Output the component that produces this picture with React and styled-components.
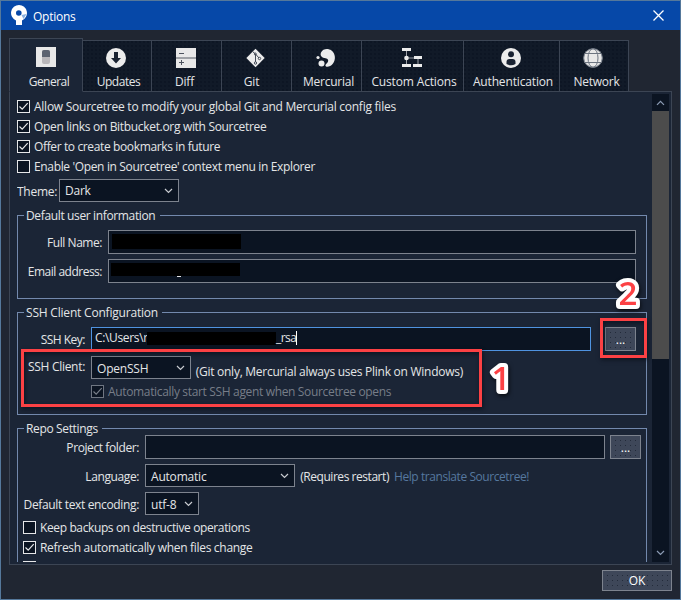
import React from "react";
import styled, { createGlobalStyle, css } from "styled-components";

const c = {
  panel: "#1b2536",
  chrome: "#202632",
  field: "#0b1422",
  edge: "#3c4554",
  fieldEdge: "#7d838e",
  group: "#7389ad",
  text: "#e4e5e7",
  red: "#fc4144",
};

const Global = createGlobalStyle`
  * { box-sizing: border-box; }
  body { margin: 0; overflow: hidden; background: ${c.chrome}; }
`;

const Window = styled.main`
  width: 681px;
  height: 600px;
  display: flex;
  flex-direction: column;
  border: 1px solid #55789b;
  background: ${c.chrome};
  color: ${c.text};
  font: 12px/16px "Open Sans", "Noto Sans", sans-serif;
  letter-spacing: -0.2px;
  white-space: nowrap;
`;

const TitleBar = styled.header`
  height: 29px;
  flex: none;
  display: flex;
  align-items: center;
  padding: 0 16px 0 9px;
  gap: 6px;
  background: #0648a8;
  color: #fff;
`;

const Title = styled.h1`
  flex: 1;
  margin: 2px 0 0;
  font: inherit;
  letter-spacing: -0.25px;
`;

const Text = styled.span`
  letter-spacing: ${(p) => p.$ls ?? -0.2}px;
  margin-top: ${(p) => p.$drop || 0}px;
  color: ${(p) => p.$color || "inherit"};
`;

const TabStrip = styled.nav`
  display: flex;
  align-items: flex-end;
  height: 54px;
  flex: none;
  margin: 8px 0 -1px 8px;
`;

const Tab = styled.div`
  flex: none;
  width: ${(p) => p.$w}px;
  height: 52px;
  padding: 7px 2px 0 0;
  display: flex;
  flex-direction: column;
  align-items: center;
  gap: 6px;
  border: 1px solid ${c.edge};
  border-left-width: ${(p) => (p.$first ? 1 : 0)}px;
  background: radial-gradient(circle at 1px 1px, #0b1422 0.6px, transparent 1px) 0 0 / 4px 4px #111a28;
  ${(p) =>
    p.$active &&
    css`
      height: 54px;
      padding: 8px 0 0;
      gap: 7px;
      border-bottom-color: ${c.panel};
      background: ${c.panel};
      position: relative;
    `}
`;

const TabLabel = styled.span`
  margin-left: ${(p) => p.$shift || 0}px;
  letter-spacing: ${(p) => p.$ls ?? -0.2}px;
`;

const Panel = styled.section`
  width: 663px;
  height: 474px;
  flex: none;
  margin-left: 8px;
  padding: 1px 2px 1px 7px;
  display: flex;
  justify-content: space-between;
  border: 1px solid ${c.edge};
  background: ${c.panel};
`;

const Content = styled.div`
  width: 630px;
  height: 469px;
  padding-top: 3px;
  overflow: hidden;
`;

const ScrollTrack = styled.div`
  width: 17px;
  height: 468px;
  margin-top: 1px;
  display: flex;
  flex-direction: column;
  background: ${c.field};
`;

const ScrollButton = styled.div`
  height: 17px;
  flex: none;
  display: flex;
  align-items: center;
  justify-content: center;
  padding-bottom: ${(p) => p.$lift || 0}px;
`;

const ScrollThumb = styled.div`
  height: 248px;
  margin-bottom: auto;
  background: #4c4c4c;
`;

const CheckRow = styled.div`
  display: flex;
  align-items: flex-start;
  height: 20px;
  gap: 4px;
  padding: 3px 0 0 ${(p) => p.$indent || 0}px;
  color: ${(p) => (p.$off ? "#777d88" : "inherit")};
`;

const Box = styled.span`
  width: 13px;
  height: 13px;
  margin-top: 1px;
  flex: none;
  display: flex;
  border: 1px solid ${(p) => (p.$off ? "#6f7682" : "#e6e7e9")};
  background: ${c.field};
`;

const Row = styled.div`
  display: flex;
  align-items: center;
  height: ${(p) => p.$h || 24}px;
  margin-top: ${(p) => p.$top || 0}px;
`;

const FieldLabel = styled.label`
  width: ${(p) => p.$w}px;
  margin-right: ${(p) => p.$gap ?? 6}px;
  margin-top: ${(p) => p.$drop ?? 2}px;
  flex: none;
  text-align: right;
  letter-spacing: ${(p) => p.$ls ?? -0.4}px;
`;

const Group = styled.section`
  height: ${(p) => p.$h}px;
  margin-top: ${(p) => p.$top}px;
  border: 1px solid ${c.group};
`;

const Legend = styled.h2`
  width: ${(p) => p.$w}px;
  height: 16px;
  margin: -9px 0 0 6px;
  padding: 1px 0 0 2px;
  font: inherit;
  letter-spacing: ${(p) => p.$ls ?? -0.2}px;
  background: ${c.panel};
`;

const Field = styled.div`
  width: ${(p) => p.$w}px;
  height: 24px;
  flex: none;
  display: flex;
  align-items: flex-start;
  padding: 2px 3px;
  border: 1px solid ${(p) => (p.$focus ? "#4f93e0" : c.fieldEdge)};
  background: ${c.field};
`;

const PathStart = styled.span`
  width: 52px;
  flex: none;
  letter-spacing: -0.35px;
`;

const Redaction = styled.span`
  width: ${(p) => p.$w}px;
  height: ${(p) => p.$h}px;
  margin: ${(p) => p.$m || 0};
  flex: none;
  background: #000;
`;

const Remnant = styled.span`
  width: 4px;
  height: 1px;
  margin: 14px 0 0 -63px;
  background: #e4e5e7;
`;

const Caret = styled.span`
  width: 1px;
  height: 14px;
  margin-top: 1px;
  background: #fff;
`;

const Select = styled.div`
  width: ${(p) => p.$w}px;
  height: 23px;
  flex: none;
  display: flex;
  align-items: center;
  justify-content: space-between;
  padding: 0 5px;
  border: 1px solid ${c.fieldEdge};
  background: ${c.field};
`;

const Button = styled.button`
  width: ${(p) => p.$w}px;
  height: ${(p) => p.$h || 24}px;
  flex: none;
  margin-left: ${(p) => p.$left || 0}px;
  padding: ${(p) => p.$drop || 0}px 0 0;
  border: 1px solid ${c.fieldEdge};
  background: radial-gradient(circle at 2.5px 2.5px, #232b3a 0.7px, transparent 0.9px) 2px 2px / 5px 5px #3e4759;
  color: #fff;
  font: inherit;
`;

const Footer = styled.footer`
  display: flex;
  justify-content: flex-end;
  padding: 5px 8px 0 0;
`;

const Highlight = styled.div`
  position: absolute;
  left: ${(p) => p.$x}px;
  top: ${(p) => p.$y}px;
  width: ${(p) => p.$w}px;
  height: ${(p) => p.$h}px;
  border: 3px solid ${c.red};
  box-shadow: 1px 2px 4px rgba(5, 10, 20, 0.6), inset 1px 2px 4px rgba(5, 10, 20, 0.6);
`;

const CalloutBadge = styled.svg`
  position: absolute;
  left: ${(p) => p.$x}px;
  top: ${(p) => p.$y}px;
  filter: drop-shadow(1px 2px 2px rgba(0, 0, 0, 0.65));

  text {
    font: 600 33px "Open Sans", sans-serif;
    letter-spacing: 0;
    text-anchor: middle;
    fill: ${c.red};
    stroke: #fff;
    stroke-width: 8px;
    stroke-linejoin: round;
    paint-order: stroke fill;
  }
`;

const Callout = ({ x, y, children }) => (
  <CalloutBadge $x={x} $y={y} width="40" height="44">
    <text x="20" y="34">{children}</text>
  </CalloutBadge>
);

const Chevron = ({ up, color = "#c9ccd1" }) => (
  <svg width="9" height="6" viewBox="0 0 9 6" fill="none" stroke={color} strokeWidth="1.2">
    <path d={up ? "M1 4.8 4.5 1.3 8 4.8" : "M1 1 4.5 4.5 8 1"} />
  </svg>
);

const Check = ({ label, on, off, indent, ls }) => (
  <CheckRow $indent={indent} $off={off}>
    <Box $off={off}>
      {on && (
        <svg width="11" height="11" viewBox="0 0 11 11" fill="none" stroke={off ? "#777d88" : "#e6e7e9"} strokeWidth="1.2">
          <path d="M1.5 5.5 4.2 8.2 9.7 2.2" />
        </svg>
      )}
    </Box>
    <Text $ls={ls}>{label}</Text>
  </CheckRow>
);

const glyphs = {
  General: (
    <>
      <path fill="#e8e8e8" d="M0 0h20v20H0z" />
      <rect x="6" y="3" width="8" height="14" rx="2" fill="#b9b7ba" />
      <path fill="#5c6370" d="M6 5q0-2 2-2h4q2 0 2 2v5H6z" />
    </>
  ),
  Updates: (
    <>
      <circle cx="10" cy="10" r="10" fill="#ececec" />
      <path fill="#1a2332" d="M8 4h4v6h3l-5 5.500L5 10h3z" />
    </>
  ),
  Diff: (
    <>
      <path fill="#e8e8e8" d="M0 0h20v9H0zM0 11h20v9H0z" />
      <path fill="#9ea1a6" d="M0 9h20v2H0z" />
      <path stroke="#4d535e" d="M3 5.500h5M3 14.500h5M5.500 12v5" />
    </>
  ),
  Git: (
    <>
      <path fill="#ececec" d="m9.500.8 9.200 9.200-9.200 9.200L.3 10z" />
      <g fill="none" stroke="#454c58">
        <path d="M6.500 3.500 9.500 6v8M9.500 6l3.500 4" />
        <circle cx="9.500" cy="15" r="1.200" />
        <circle cx="13.500" cy="10.500" r="1.200" />
        <circle cx="9.300" cy="6" r="1" />
      </g>
    </>
  ),
  Mercurial: (
    <g fill="#ececec">
      <path d="M5 4.500C7 .5 12 0 15.500 2.500c4 3 4.500 9 1.500 13-2 2.700-5.500 4-7 3-1.500-1.200.5-2.500 1.500-4 1.500-2 .5-4-2-4.200C6.500 10 3.500 8 5 4.500z" />
      <circle cx="5.500" cy="15.500" r="3" />
      <circle cx="2" cy="9.500" r="1.600" />
    </g>
  ),
  "Custom Actions": (
    <>
      <path fill="none" stroke="#9ca0a7" d="M4.500 3v14M4.500 10H16v7" />
      <path fill="#ececec" d="M0 0h9v3H0zM0 16h9v3H0zM11 16h9v3h-9zM12 8h8v3h-8z" />
      <circle cx="4.500" cy="10" r="2.300" fill="#ececec" />
    </>
  ),
  Authentication: (
    <>
      <circle cx="10" cy="10" r="10" fill="#ececec" />
      <circle cx="10" cy="6.300" r="3" fill="#1a2332" />
      <path fill="#1a2332" d="M5.500 16v-2q0-3 3-3h3q3 0 3 3v2q-4.500 2.500-9 0z" />
    </>
  ),
  Network: (
    <>
      <circle cx="10" cy="10" r="9.500" fill="#e8e8e8" />
      <g fill="none" stroke="#6c7480" strokeWidth="1">
        <circle cx="10" cy="10" r="9.300" />
        <ellipse cx="10" cy="10" rx="5" ry="9.300" />
        <path d="M2 5.500h16M2 14.500h16" />
      </g>
    </>
  ),
};

const tabs = [
  ["General", 74, 6, -0.5],
  ["Updates", 69, 5, -0.45],
  ["Diff", 70, -2, -0.2],
  ["Git", 70, -8, -0.2],
  ["Mercurial", 70, 6, -0.25],
  ["Custom Actions", 102, 5, -0.15],
  ["Authentication", 96, 5, -0.15],
  ["Network", 69, 7, -0.25],
];

export default function App() {
  return (
    <>
      <Global />
      <Window>
        <TitleBar>
          <svg width="17" height="21" viewBox="0 0 17 21">
            <path fill="#fff" d="M9 0a8 8 0 0 1 3 15.400V20H6v-4.600A8 8 0 0 1 9 0z" />
            <circle cx="8.800" cy="8" r="2.800" fill="#0648a8" />
            <path fill="#8ab0df" d="m11.500 10 5-1-3 5z" />
          </svg>
          <Title>Options</Title>
          <svg width="11" height="11" viewBox="0 0 11 11" stroke="#fff" strokeWidth="1.300">
            <path d="m.5.5 10 10M10.500.5l-10 10" />
          </svg>
        </TitleBar>

        <TabStrip>
          {tabs.map(([name, w, shift, ls], i) => (
            <Tab key={name} $w={w} $active={i === 0} $first={i === 0}>
              <svg width="20" height="20" viewBox="0 0 20 20">{glyphs[name]}</svg>
              <TabLabel $shift={shift} $ls={ls}>{name}</TabLabel>
            </Tab>
          ))}
        </TabStrip>

        <Panel>
          <Content>
            <Check on ls={-0.25} label="Allow Sourcetree to modify your global Git and Mercurial config files" />
            <Check on ls={-0.32} label="Open links on Bitbucket.org with Sourcetree" />
            <Check on ls={-0.37} label="Offer to create bookmarks in future" />
            <Check ls={-0.35} label="Enable 'Open in Sourcetree' context menu in Explorer" />
            <Row $h={23} $top={3}>
              <FieldLabel $w={38} $gap={4} $ls={-0.25}>Theme:</FieldLabel>
              <Select $w={120}><Text $drop={1} $ls={-0.25}>Dark</Text><Chevron /></Select>
            </Row>

            <Group $h={84} $top={13}>
              <Legend $w={136} $ls={-0.36}>Default user information</Legend>
              <Row $top={7}>
                <FieldLabel $w={84} $ls={-0.45}>Full Name:</FieldLabel>
                <Field $w={528}><Redaction $w={129} $h={15} $m="1px 0 0 0" /></Field>
              </Row>
              <Row $top={5}>
                <FieldLabel $w={84} $ls={-0.5}>Email address:</FieldLabel>
                <Field $w={528}><Redaction $w={129} $h={13} $m="1px 0 0 -1px" /><Remnant /></Field>
              </Row>
            </Group>

            <Group $h={103} $top={13}>
              <Legend $w={138}>SSH Client Configuration</Legend>
              <Row $top={7}>
                <FieldLabel $w={67} $ls={-0.5}>SSH Key:</FieldLabel>
                <Field $w={500} $focus>
                  <PathStart>C:\Users\r</PathStart><Redaction $w={129} $h={13} $m="2px 0 0 0" /><Text $ls={-0.55}>_rsa</Text><Caret />
                </Field>
                <Button $w={31} $left={14} $drop={2}>...</Button>
              </Row>
              <Row $h={23} $top={5}>
                <FieldLabel $w={67} $drop={-2} $ls={-0.3}>SSH Client:</FieldLabel>
                <Select $w={100}><Text $drop={2}>OpenSSH</Text><Chevron /></Select>
                <FieldLabel as="span" $gap={0} $drop={8} $w={272} $ls={-0.26}>(Git only, Mercurial always uses Plink on Windows)</FieldLabel>
              </Row>
              <Row $h={20} $top={2}>
                <Check on off indent={73} ls={-0.34} label="Automatically start SSH agent when Sourcetree opens" />
              </Row>
            </Group>

            <Group $h={200} $top={13}>
              <Legend $w={78} $ls={-0.35}>Repo Settings</Legend>
              <Row $top={-1}>
                <FieldLabel $w={121}>Project folder:</FieldLabel>
                <Field $w={460} />
                <Button $w={31} $left={5} $drop={1}>...</Button>
              </Row>
              <Row $h={23} $top={5}>
                <FieldLabel $w={121}>Language:</FieldLabel>
                <Select $w={150}><Text $drop={2}>Automatic</Text><Chevron /></Select>
                <FieldLabel as="span" $w={94} $gap={5} $ls={-0.45}>(Requires restart)</FieldLabel>
                <Text $color="#56789f" $drop={2} $ls={-0.43}>Help translate Sourcetree!</Text>
              </Row>
              <Row $h={23} $top={5}>
                <FieldLabel $w={121} $ls={-0.35}>Default text encoding:</FieldLabel>
                <Select $w={54}><Text $drop={2}>utf-8</Text><Chevron /></Select>
              </Row>
              <Row $h={2} />
              <Check indent={5} ls={-0.38} label="Keep backups on destructive operations" />
              <Check on indent={5} ls={-0.3} label="Refresh automatically when files change" />
              <Check indent={5} label="" />
            </Group>
          </Content>
          <ScrollTrack>
            <ScrollButton><Chevron up color="#8b9bb4" /></ScrollButton>
            <ScrollThumb />
            <ScrollButton $lift={2}><Chevron color="#8b9bb4" /></ScrollButton>
          </ScrollTrack>
        </Panel>

        <Footer><Button $w={70} $h={21}>OK</Button></Footer>
        <Highlight $x={21} $y={349} $w={461} $h={58} />
        <Highlight $x={600} $y={318} $w={47} $h={40} />
        <Callout x={481} y={356}>1</Callout>
        <Callout x={608} y={271}>2</Callout>
      </Window>
    </>
  );
}
